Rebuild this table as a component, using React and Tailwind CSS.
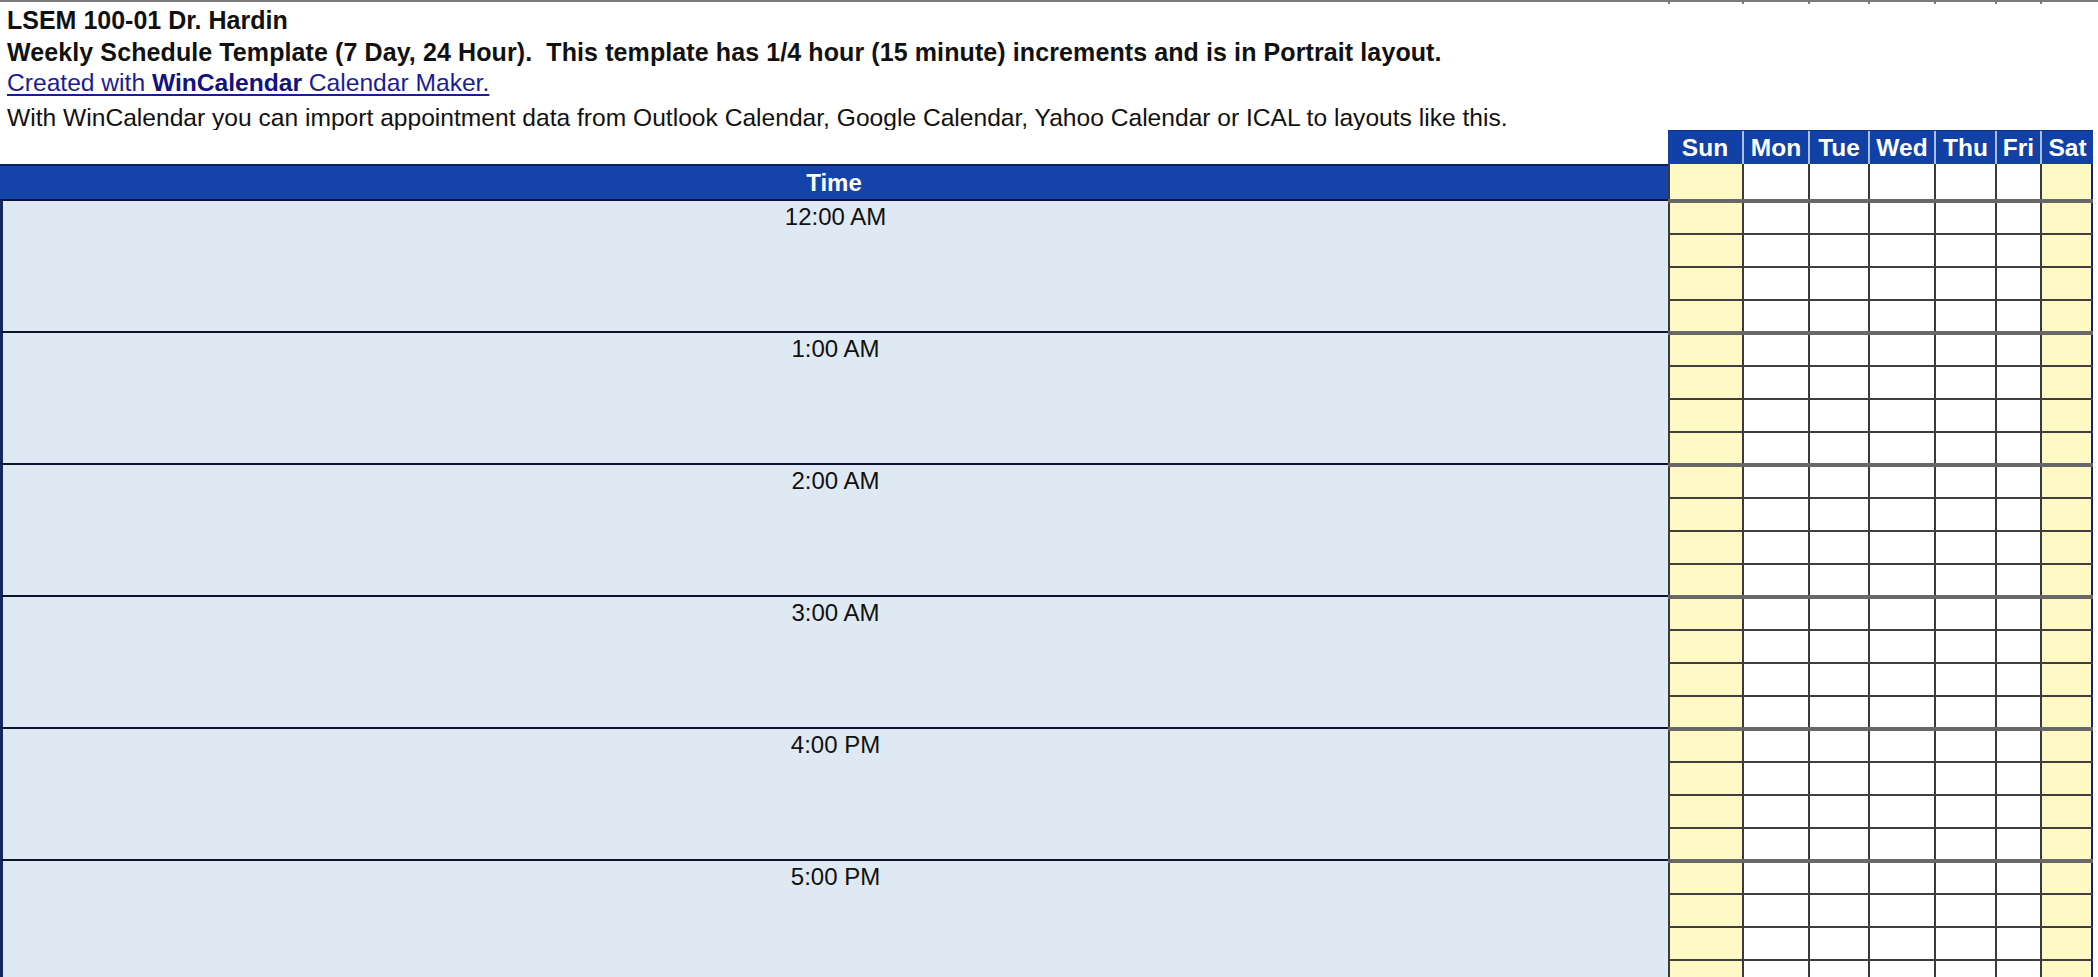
import React from "react";

const DAYS = [
  { name: "Sun", w: "w-[74px]", weekend: true },
  { name: "Mon", w: "w-[66px]", weekend: false },
  { name: "Tue", w: "w-[60px]", weekend: false },
  { name: "Wed", w: "w-[66px]", weekend: false },
  { name: "Thu", w: "w-[61px]", weekend: false },
  { name: "Fri", w: "w-[45px]", weekend: false },
  { name: "Sat", w: "w-[53px]", weekend: true },
];

const HOURS = ["12:00 AM", "1:00 AM", "2:00 AM", "3:00 AM", "4:00 PM", "5:00 PM"];

function DayCells({ height }) {
  return (
    <div className="flex">
      {DAYS.map((d, i) => (
        <div
          key={d.name}
          className={`${d.w} ${height} box-border border-l-2 border-[#3a3a3a] ${
            d.weekend ? "bg-[#fff9c6]" : "bg-white"
          } ${i === DAYS.length - 1 ? "border-r-2 border-r-[#14237a]" : ""}`}
        />
      ))}
    </div>
  );
}

function HourBlock({ label }) {
  return (
    <div className="flex h-[132px] shrink-0">
      <div className="w-[1668px] h-full box-border border-t-2 border-[#0c1430] border-l-[3px] border-l-[#14275e] bg-[#dfe9f3] flex justify-center">
        <span className="text-[24px] leading-[28px] text-[#111] pt-[2px]">{label}</span>
      </div>
      <div className="flex flex-col border-t-4 border-[#686868]">
        <div className="border-b-2 border-[#3f3f3f]"><DayCells height="h-[30px]" /></div>
        <div className="border-b-2 border-[#3f3f3f]"><DayCells height="h-[31px]" /></div>
        <div className="border-b-2 border-[#3f3f3f]"><DayCells height="h-[31px]" /></div>
        <div><DayCells height="h-[32px]" /></div>
      </div>
      <div className="flex-1 bg-white" />
    </div>
  );
}

export default function App() {
  return (
    <div
      className="w-[2098px] h-[977px] overflow-hidden bg-white flex flex-col relative"
      style={{ fontFamily: '"Liberation Sans", Arial, sans-serif' }}
    >
      {/* top border remnants */}
      <div className="flex h-[4px] shrink-0">
        <div className="w-[1668px] border-t-2 border-[#7a7a7a]" />
        <div className="flex border-t-2 border-[#7a7a7a]">
          {DAYS.map((d) => (
            <div key={d.name} className={`${d.w} h-full border-l-2 border-[#7a7a7a]`} />
          ))}
        </div>
        <div className="flex-1 border-t-2 border-[#7a7a7a]" />
      </div>

      {/* heading texts */}
      <div className="pl-[7px] flex flex-col text-[#111] shrink-0">
        <div className="h-[33px] flex items-center text-[25px] font-bold">LSEM 100-01 Dr. Hardin</div>
        <div className="h-[31px] flex items-center text-[25px] font-bold tracking-[0.1px] whitespace-pre">
          {"Weekly Schedule Template (7 Day, 24 Hour).  This template has 1/4 hour (15 minute) increments and is in Portrait layout."}
        </div>
        <div className="h-[31px] flex items-center text-[24.6px] text-[#1c1c96]">
          <span className="underline decoration-[1.5px] underline-offset-[3px]">
            Created with <span className="font-bold text-[#121283]">WinCalendar</span> Calendar Maker.
          </span>
        </div>
        <div className="h-[31px] flex items-center pt-[7px] text-[24.6px] whitespace-nowrap">
          With WinCalendar you can import appointment data from Outlook Calendar, Google Calendar, Yahoo Calendar or ICAL to layouts like this.
        </div>
      </div>

      {/* day header row */}
      <div className="flex h-[34px] shrink-0">
        <div className="w-[1668px] bg-white" />
        <div className="flex bg-[#1140a7] border-t border-[#0b2f86]">
          {DAYS.map((d, i) => (
            <div
              key={d.name}
              className={`${d.w} h-full box-border ${i > 0 ? "border-l-2 border-[#a9c0e8]" : ""} flex items-end justify-center pb-[3px] text-white font-bold text-[24.5px] leading-[26px]`}
            >
              {d.name}
            </div>
          ))}
        </div>
        <div className="flex-1 bg-white" />
      </div>

      {/* time header row */}
      <div className="flex h-[35px] shrink-0">
        <div className="w-[1668px] h-full box-border border-t-2 border-[#0a1f5e] bg-[#1444aa] flex items-center justify-center text-white font-bold text-[24px]">
          Time
        </div>
        <DayCells height="h-[35px]" />
        <div className="flex-1 bg-white" />
      </div>

      {HOURS.map((h) => (
        <HourBlock key={h} label={h} />
      ))}
    </div>
  );
}
